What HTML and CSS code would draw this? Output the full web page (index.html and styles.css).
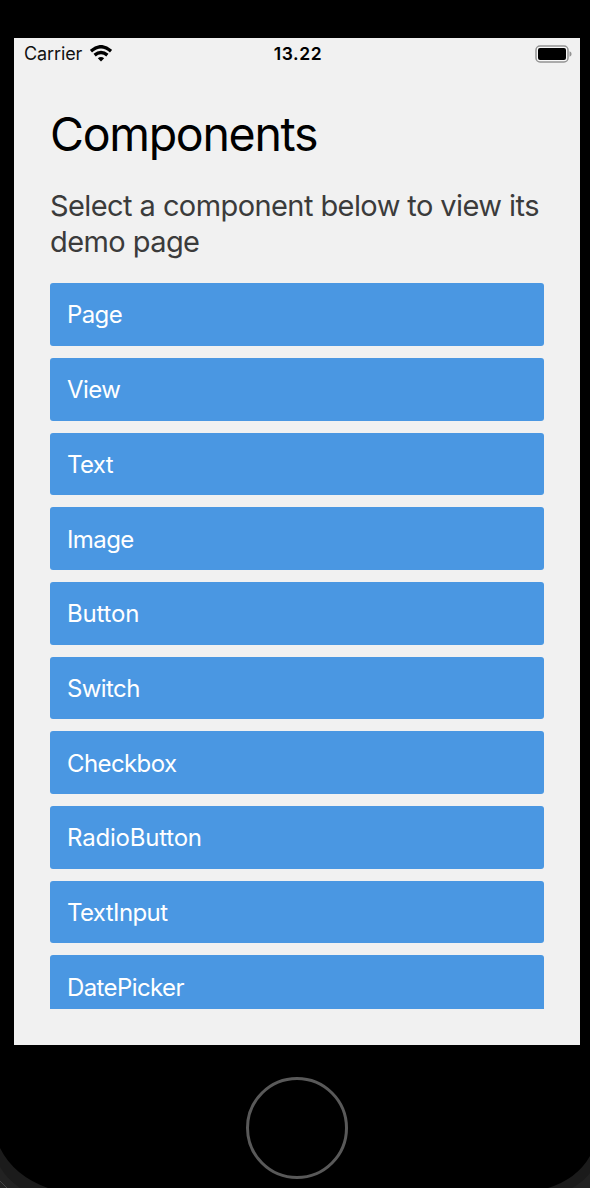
FILE: index.html
```
<!DOCTYPE html>
<html lang="en">
<head>
<meta charset="utf-8">
<title>Components</title>
<link rel="stylesheet" href="styles.css">
</head>
<body>
<div class="device">
  <main class="screen">
    <header class="status">
      <div class="carrier"><span>Carrier</span>
        <svg class="wifi" viewBox="0 0 22 17" width="22" height="17">
          <g fill="none" stroke="#000" stroke-width="3.4">
            <path d="M0.9 6.1Q11-2.7 21.1 6.1"/>
            <path d="M4.6 10.1Q11 4.8 17.4 10.1"/>
          </g>
          <path d="M11 16.6L7.8 13.2Q11 10.6 14.2 13.2Z"/>
        </svg>
      </div>
      <time class="clock">13.22</time>
      <svg class="battery" viewBox="0 0 37 18" width="37" height="18">
        <rect x="1" y="1" width="32" height="16" rx="4" fill="#f8f8f8" stroke="#929292" stroke-width="1.5"/>
        <rect x="3" y="3" width="28" height="12" rx="2"/>
        <path d="M34.5 6.2Q36.6 7 36.6 9T34.5 11.8Z" fill="#929292"/>
      </svg>
    </header>
    <h1 class="title">Components</h1>
    <p class="intro">Select a component below to view its<br>demo page</p>
    <nav class="list">
      <a class="item">Page</a>
      <a class="item">View</a>
      <a class="item">Text</a>
      <a class="item">Image</a>
      <a class="item loose">Button</a>
      <a class="item">Switch</a>
      <a class="item">Checkbox</a>
      <a class="item loose">RadioButton</a>
      <a class="item">TextInput</a>
      <a class="item">DatePicker</a>
    </nav>
  </main>
  <div class="chin"><div class="home"></div></div>
  <svg class="casing" viewBox="0 0 590 40" width="590" height="40">
    <path fill="#1b1b1b" d="M0 0Q14 28 48 40H0ZM590 8Q577 31 548 40H590Z"/>
    <path fill="#222" d="M0 19Q7 31 20 40H0ZM590 25Q583 34 572 40H590Z"/>
    <path fill="none" stroke="#444" d="M0 33L7 40"/>
  </svg>
</div>
</body>
</html>
```
FILE: styles.css
```
* { box-sizing: border-box; }
body { margin: 0; background: #000; font-family: Inter, sans-serif; }
.device { position: relative; height: 1188px; padding: 38px 10px 0 14px; overflow: hidden; background: #000; }
.screen { display: flex; flex-direction: column; height: 1007px; padding-bottom: 36.3px; background: #f1f1f1; }
.status { display: grid; grid-template-columns: 1fr auto 1fr; align-items: center; height: 31px; padding: 0 8px 0 10px; color: #111; font-size: 18px; line-height: 22px; }
.carrier { display: flex; align-items: center; gap: 7.5px; letter-spacing: -0.1px; }
.clock { color: #000; font-size: 17.5px; font-weight: 600; letter-spacing: 0.6px; }
.battery { justify-self: end; }
.title { margin: 36px 0 0 36px; font-size: 46.5px; line-height: 58px; font-weight: 400; letter-spacing: -1.3px; color: #000; }
.intro { margin: 25px 0 0 36px; font-size: 29px; line-height: 36px; letter-spacing: -0.58px; color: #3b3b3b; white-space: nowrap; }
.list { display: flex; flex: 1; flex-direction: column; gap: 12px; min-height: 0; margin: 23.3px 36px 0; overflow: hidden; }
.item { flex: 0 0 62.7px; padding: 2.2px 0 0 17px; border-radius: 3px; background: #4a97e2; color: #fff; font-size: 24px; line-height: 60.5px; letter-spacing: -0.6px; }
.loose { letter-spacing: -0.2px; }
.chin { display: flex; justify-content: center; padding-top: 32px; }
.home { width: 102px; height: 102px; border: 3px solid #595959; border-radius: 50%; }
.casing { position: absolute; left: 0; bottom: 0; }
```
